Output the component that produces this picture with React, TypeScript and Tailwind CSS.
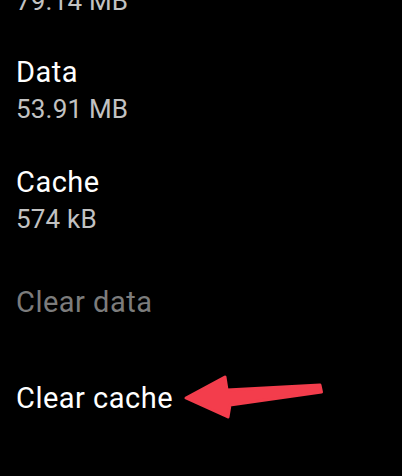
const rowTitle = "text-[29px] leading-9 tracking-[0.5px] text-white";
const rowValue = "mt-[3px] text-[26px] leading-8 tracking-[0.2px] text-[#c2c2c2]";

function StorageRow({ title, value }: { title: string; value: string }) {
  return (
    <div>
      <div className={rowTitle}>{title}</div>
      <div className={rowValue}>{value}</div>
    </div>
  );
}

export default function App() {
  return (
    <div
      className="relative h-[476px] w-[402px] overflow-hidden bg-black pl-4"
      style={{ fontFamily: "Roboto, sans-serif" }}
    >
      <div className="-mt-[15px] text-[26px] leading-8 tracking-[0.2px] text-[#c2c2c2]">79.14 MB</div>

      <div className="mt-[37px]">
        <StorageRow title="Data" value="53.91 MB" />
      </div>
      <div className="mt-[39px]">
        <StorageRow title="Cache" value="574 kB" />
      </div>

      <div className="mt-[49px] text-[29px] leading-9 tracking-[0.5px] text-[#7c7c7c]">Clear data</div>
      <div className="mt-[60px] text-[29px] leading-9 tracking-[0.5px] text-white">Clear cache</div>

      {/* red annotation arrow */}
      <svg
        className="absolute left-[180px] top-[370px]"
        width="150"
        height="55"
        viewBox="0 0 150 55"
      >
        <path
          d="M6 28 L45 7 L47 20 L140 15 L141.5 22 L50 35 L48 47 Z"
          fill="#f33d4c"
          stroke="#f33d4c"
          strokeWidth="3"
          strokeLinejoin="round"
        />
      </svg>
    </div>
  );
}
